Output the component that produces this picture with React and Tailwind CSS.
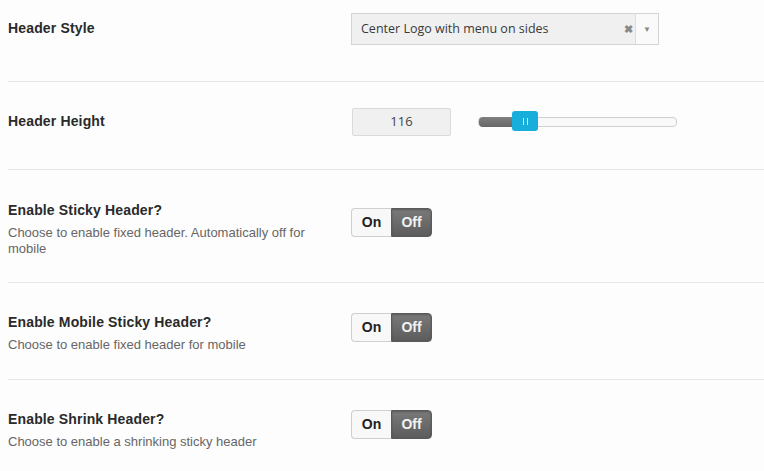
import React from "react";

// Header options panel – select, number+slider, on/off toggles

const arial = { fontFamily: '"Liberation Sans", Arial, sans-serif' };
const open = { fontFamily: '"Open Sans", "Liberation Sans", sans-serif' };

function Toggle() {
  return (
    <div className="flex h-[29px] w-[81px] text-[14px] font-bold" style={arial}>
      <div className="flex w-[40px] items-center justify-center rounded-l-[4px] border border-r-0 border-[#cfcfcf] bg-[#f8f8f8] text-[#222]">
        On
      </div>
      <div className="flex w-[41px] items-center justify-center rounded-r-[4px] border border-[#5a5a5a] bg-gradient-to-b from-[#7a7a7a] to-[#5c5c5c] text-[#f2f2f2] shadow-[inset_0_1px_2px_rgba(0,0,0,0.25)]">
        Off
      </div>
    </div>
  );
}

function Row({ title, desc, labelPad, ctrlPad, height, last, children }) {
  return (
    <div className={`flex ${height} ${last ? "" : "border-b border-[#e6e6e6]"}`}>
      <div className={`w-[343px] ${labelPad}`} style={arial}>
        <div className="text-[14px] font-bold leading-[16px] tracking-[0.15px] text-[#2a2a2a]">{title}</div>
        {desc && (
          <div className="mt-[7px] pr-6 text-[13px] leading-[16px] text-[#666]">{desc}</div>
        )}
      </div>
      <div className={ctrlPad}>{children}</div>
    </div>
  );
}

export default function App() {
  return (
    <div className="min-h-[471px] w-[764px] bg-[#fdfdfd] pl-2">
      <Row title="Header Style" labelPad="pt-[20px]" ctrlPad="pt-[13px]" height="h-[82px]">
        <div className="flex h-[32px] w-[308px] border border-[#d4d4d4] bg-[#f0f0f0]" style={open}>
          <div className="flex flex-1 items-center pl-[9px] pt-[1px] text-[12.5px] text-[#3a3a3a]">
            Center Logo with menu on sides
          </div>
          <div className="flex w-[11px] items-center text-[11px] font-bold text-[#888]">✖</div>
          <div className="flex w-[23px] items-center justify-center border-l border-[#dcdcdc] bg-[#fafafa] text-[8px] text-[#888]">
            ▼
          </div>
        </div>
      </Row>

      <Row title="Header Height" labelPad="pt-[31px]" ctrlPad="pt-[26px]" height="h-[88px]">
        <div className="flex items-center">
          <div
            className="ml-[1px] flex h-[28px] w-[99px] items-center justify-center rounded-[2px] border border-[#dadada] bg-[#f0f0f0] text-[13px] text-[#444]"
            style={open}
          >
            116
          </div>
          <div className="relative ml-[27px] h-[10px] w-[199px] rounded-[4px] border border-[#d0d0d0] bg-[#f9f9f9]">
            <div className="absolute left-0 top-[-1px] h-[10px] w-[46px] rounded-l-[4px] bg-gradient-to-b from-[#808080] to-[#666]" />
            <div className="absolute left-[33px] top-[-7px] flex h-[20px] w-[26px] items-center justify-center gap-[3px] rounded-[3px] bg-[#17aedb]">
              <span className="h-[7px] w-px bg-[#d8f3fc]" />
              <span className="h-[7px] w-px bg-[#d8f3fc]" />
            </div>
          </div>
        </div>
      </Row>

      <Row
        title="Enable Sticky Header?"
        desc="Choose to enable fixed header. Automatically off for mobile"
        labelPad="pt-[32px]"
        ctrlPad="pt-[38px]"
        height="h-[113px]"
      >
        <Toggle />
      </Row>

      <Row
        title="Enable Mobile Sticky Header?"
        desc="Choose to enable fixed header for mobile"
        labelPad="pt-[31px]"
        ctrlPad="pt-[30px]"
        height="h-[97px]"
      >
        <Toggle />
      </Row>

      <Row
        title="Enable Shrink Header?"
        desc="Choose to enable a shrinking sticky header"
        labelPad="pt-[31px]"
        ctrlPad="pt-[30px]"
        height="h-[91px]"
        last
      >
        <Toggle />
      </Row>
    </div>
  );
}
